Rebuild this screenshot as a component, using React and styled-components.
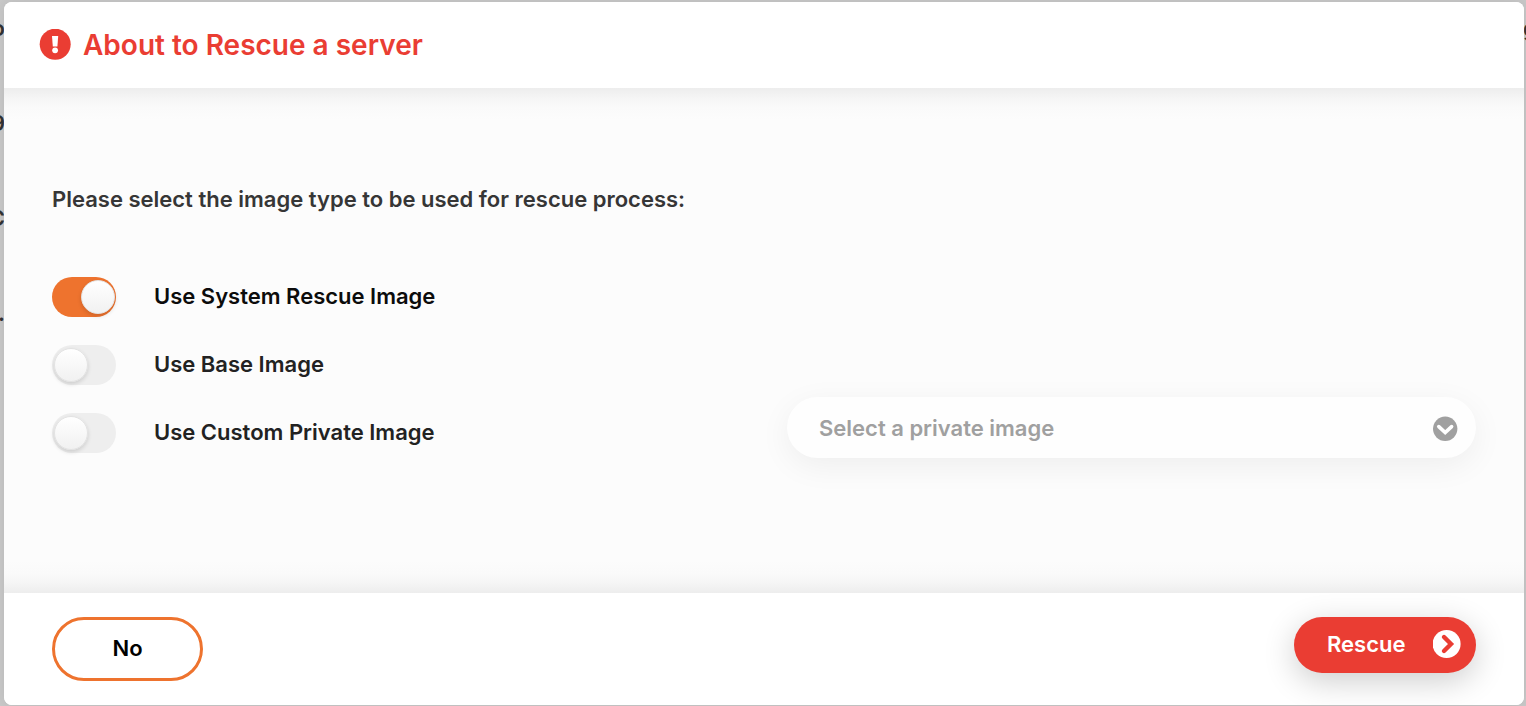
import React, { useState } from "react";
import styled, { createGlobalStyle } from "styled-components";

const GlobalStyle = createGlobalStyle`
  *, *::before, *::after { box-sizing: border-box; }
  body {
    margin: 0;
    background: #c8c8c8;
    font-family: Inter, "Liberation Sans", sans-serif;
    font-weight: 600;
    font-size: 22px;
    line-height: 30px;
  }
  button, select, input { font: inherit; }
`;

const Page = styled.div`
  position: relative;
  min-height: 100vh;
  padding: 2px 2px 1px 4px;
  overflow: hidden;
`;

const Backdrop = styled.div`
  position: absolute;
  inset: 0;
  display: flex;
  justify-content: space-between;
  padding-top: 13px;
  color: #333;
`;

const BackdropColumn = styled.div`
  display: flex;
  flex-direction: column;
  gap: 65px;
  width: ${(p) => (p.$end ? "3px" : "5px")};
  align-items: ${(p) => (p.$end ? "flex-start" : "flex-end")};
`;

const Dialog = styled.section`
  position: relative;
  display: flex;
  flex-direction: column;
  border-radius: 8px;
  overflow: hidden;
  background: #fff;
  box-shadow: 0 0 12px rgba(0, 0, 0, 0.08);
`;

const Header = styled.header`
  display: flex;
  align-items: center;
  gap: 12px;
  height: 86px;
  padding: 0 35px;
  background: #fff;
  color: #ea3d33;
`;

const Title = styled.h1`
  margin: 0;
  font-size: 28px;
  line-height: 36px;
  font-weight: 600;
`;

const Body = styled.div`
  padding: 96px 48px 135px;
  background:
    linear-gradient(#ededed, #f5f5f5 10px, #fafafa 20px, #fcfcfc) top / 100% 32px no-repeat,
    linear-gradient(#fcfcfc, #fafafa 12px, #f5f5f5 22px, #ededed) bottom / 100% 32px no-repeat,
    #fcfcfc;
`;

const Prompt = styled.p`
  margin: 0 0 63px;
  color: #363636;
`;

const Choices = styled.div`
  display: grid;
  grid-template-columns: 1fr 1fr;
  column-gap: 46px;
  align-items: end;
`;

const Options = styled.div`
  display: flex;
  flex-direction: column;
  gap: 28px;
  padding-bottom: 5px;
`;

const Option = styled.label`
  display: flex;
  align-items: center;
  gap: 38px;
  height: 40px;
  color: ${(p) => (p.$active ? "#0c0c0c" : "#222")};
  cursor: pointer;
`;

const OptionText = styled.span`
  padding-bottom: 3px;
`;

const Toggle = styled.input`
  appearance: none;
  display: flex;
  align-items: center;
  flex: none;
  width: 64px;
  height: 40px;
  margin: 0;
  padding: 0 1px 0 2px;
  border-radius: 20px;
  background: #eee;
  cursor: pointer;

  &::before {
    content: "";
    width: 34px;
    height: 34px;
    border: 1px solid #e3e3e3;
    border-radius: 50%;
    background: linear-gradient(#fff, #f1f1f1);
    box-shadow: 0 2px 4px rgba(0, 0, 0, 0.14);
  }

  &:checked {
    justify-content: flex-end;
    background: #ee732e;
  }
`;

const SelectField = styled.div`
  position: relative;
  display: flex;
  align-items: center;
  color: #a0a0a0;

  svg {
    position: absolute;
    right: 18px;
    pointer-events: none;
  }
`;

const Select = styled.select`
  appearance: none;
  width: 100%;
  height: 61px;
  padding: 0 60px 0 32px;
  border: 0;
  border-radius: 31px;
  background: #fefefe;
  color: #a0a0a0;
  opacity: 1;
  box-shadow: 0 8px 32px rgba(0, 0, 0, 0.06);
`;

const Footer = styled.footer`
  display: flex;
  align-items: flex-start;
  justify-content: space-between;
  padding: 24px 48px;
  background: #fff;
`;

const CancelButton = styled.button`
  width: 151px;
  height: 64px;
  padding: 0 0 3px;
  border: 3px solid #ee732e;
  border-radius: 32px;
  background: #fff;
  color: #000;
  cursor: pointer;
`;

const RescueButton = styled.button`
  display: flex;
  align-items: center;
  justify-content: space-between;
  width: 182px;
  height: 56px;
  padding: 0 15px 2px 33px;
  border: 0;
  border-radius: 28px;
  background: #ea3d33;
  color: #fff;
  box-shadow: 0 8px 32px rgba(0, 0, 0, 0.2);
  cursor: pointer;
`;

const AlertIcon = () => (
  <svg width="32" height="32" viewBox="0 0 32 32" aria-hidden="true">
    <circle cx="16.2" cy="15.2" r="15.5" fill="#ea3d33" />
    <path d="M13 7h6.2l-.8 10.6h-4.6z" fill="#fff" />
    <circle cx="16.1" cy="21.3" r="2.9" fill="#fff" />
  </svg>
);

const ChevronDownIcon = () => (
  <svg width="26" height="26" viewBox="0 0 26 26" aria-hidden="true">
    <circle cx="13.2" cy="13.8" r="12.2" fill="#a0a0a0" />
    <path d="M6.8 11.6l6.4 6 6.4-6" fill="none" stroke="#fff" strokeWidth="3.6" strokeLinecap="round" />
  </svg>
);

const ChevronRightIcon = () => (
  <svg width="28" height="28" viewBox="0 0 28 28" aria-hidden="true">
    <circle cx="13.6" cy="14" r="14" fill="#fff" />
    <path d="M11 7l7 7-7 7" fill="none" stroke="#ea3d33" strokeWidth="4.4" strokeLinecap="round" />
  </svg>
);

const imageTypes = [
  { id: "system", label: "Use System Rescue Image" },
  { id: "base", label: "Use Base Image" },
  { id: "private", label: "Use Custom Private Image" },
];

export default function App() {
  const [selected, setSelected] = useState("system");

  return (
    <Page>
      <GlobalStyle />
      <Backdrop aria-hidden="true">
        <BackdropColumn>
          <span>o</span>
          <span>9</span>
          <span>C</span>
          <span>.</span>
        </BackdropColumn>
        <BackdropColumn $end>
          <span>g</span>
        </BackdropColumn>
      </Backdrop>
      <Dialog role="dialog" aria-labelledby="dialog-title">
        <Header>
          <AlertIcon />
          <Title id="dialog-title">About to Rescue a server</Title>
        </Header>
        <Body>
          <Prompt>Please select the image type to be used for rescue process:</Prompt>
          <Choices>
            <Options role="radiogroup" aria-label="Image type">
              {imageTypes.map(({ id, label }) => (
                <Option key={id} htmlFor={id} $active={selected === id}>
                  <Toggle
                    type="radio"
                    id={id}
                    name="image-type"
                    checked={selected === id}
                    onChange={() => setSelected(id)}
                  />
                  <OptionText>{label}</OptionText>
                </Option>
              ))}
            </Options>
            <SelectField>
              <Select aria-label="Private image" disabled={selected !== "private"}>
                <option>Select a private image</option>
              </Select>
              <ChevronDownIcon />
            </SelectField>
          </Choices>
        </Body>
        <Footer>
          <CancelButton type="button">No</CancelButton>
          <RescueButton type="button">
            Rescue
            <ChevronRightIcon />
          </RescueButton>
        </Footer>
      </Dialog>
    </Page>
  );
}
